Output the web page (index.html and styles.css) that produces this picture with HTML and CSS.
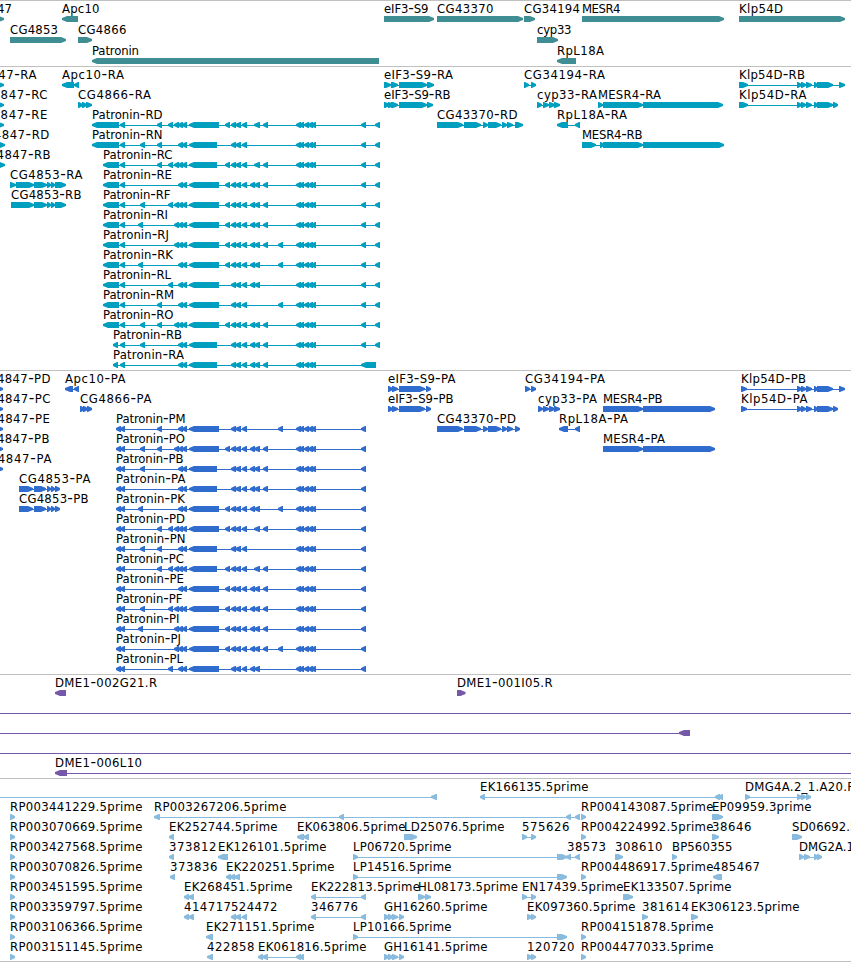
FILE: index.html
```html
<!DOCTYPE html>
<html lang="en">
<head>
    <meta charset="UTF-8">
    <meta name="viewport" content="width=device-width, initial-scale=1.0">
    <title>Genome Browser</title>
    <link rel="stylesheet" href="styles.css">
</head>
<body>
    <div class="browser">
        <svg class="track genes" id="genes"></svg>
        <svg class="track transcripts" id="transcripts"></svg>
        <svg class="track proteins" id="proteins"></svg>
        <svg class="track clones" id="clones"></svg>
        <svg class="track ests" id="ests"></svg>
    </div>
    <script src="tracks.js"></script>
</body>
</html>
```

FILE: styles.css
```css
body {
    margin: 0;
    background-color: #fff;
    overflow: hidden;
}
.browser {
    display: flex;
    flex-direction: column;
    width: 851px;
    height: 961px;
    border-bottom: 1px solid #c0c0c0;
}
.track {
    display: block;
    flex: none;
    box-sizing: border-box;
    width: 851px;
    border-top: 1px solid #c0c0c0;
    overflow: hidden;
}
.track text {
    font-family: "DejaVu Sans", sans-serif;
    font-size: 11.7px;
    fill: #000;
}
.track .dash {
    font-size: 15.5px;
}
.genes {
    height: 66px;
    fill: #3f8e94;
}
.transcripts {
    height: 304px;
    fill: #009ebf;
}
.proteins {
    height: 304px;
    fill: #306ccd;
}
.clones {
    height: 104px;
    fill: #7558a8;
}
.ests {
    height: 183px;
    fill: #88bbdd;
}
```

FILE: tracks.js
```js
const NS = 'http://www.w3.org/2000/svg';

// each feature: row | label | label start | label end | strand | exons
const genes = `
0|CG4847|-35.5|12|+|-30,4
0|Apc10|62|99.5|-|62,78
0|eIF3-S9|384|428.5|+|384,434
0|CG43370|437|493.5|+|437,523
0|CG34194|524|580|+|524,535
0|MESR4|582|620.5|+|582,724
0|Klp54D|739|783|+|739,845
1|CG4853|10|58|+|10,66
1|CG4866|78|126.5|+|78,92
1|cyp33|537|571.5|+|537,558
2|Patronin|92|139|-|92,379
2|RpL18A|557|604|-|557,576`;

const transcripts = `
0|CG4847-RA|-36|36.5|+|-10,4
1|CG4847-RC|-26|47.5|+|-10,4
2|CG4847-RE|-26|47.3|+|-10,4
3|CG4847-RD|-24.5|49.3|+|-10,5
4|CG4847-RB|-21.5|50.5|+|-10,5
5|CG4853-RA|10|82.5|+|10,16 16,34 34,47 47,51 51,55 55,66
6|CG4853-RB|11|81.5|+|11,34 34,47 47,51 51,55 55,66
0|Apc10-RA|62|124|-|62,74 74,79
1|CG4866-RA|78|151|+|78,83 82,87 86,92
0|eIF3-S9-RA|384|453|+|384,391 391,398 399,427 427,434
1|eIF3-S9-RB|384|450.5|+|384,390 388,394 391,398 399,427 427,433
2|CG43370-RD|437|517.5|+|437,463 464,481 483,488 488,501 502,507 507,513 515,523
0|CG34194-RA|524|605|+|524,529 531,536
1|cyp33-RA|537|597|+|537,542 543,549 549,555 554,560
1|MESR4-RA|598|661|+|598,603 603,643 643,723
2|RpL18A-RA|557|627|-|557,568 575,580
3|MESR4-RB|582|642.5|+|582,596 600,604 603,643 643,724
0|Klp54D-RB|739|805|+|739,748 797,802 801,806 806,812 814,818 817,833 839,845
1|Klp54D-RA|739|806.5|+|739,748 797,802 801,806 806,812 814,818 817,833 833,838`;

const proteins = `
0|CG4847-PD|-21|50.5|+|-10,3
1|CG4847-PC|-21|50.5|+|-10,3
2|CG4847-PE|-21|50|+|-10,3
3|CG4847-PB|-21|49.5|+|-10,3
4|CG4847-PA|-21|51.5|+|-10,3
5|CG4853-PA|19|90.5|+|19,33 34,46 47,51 51,55 55,60
6|CG4853-PB|19|88.5|+|19,33 34,46 47,51 51,55 55,60
0|Apc10-PA|65|125.5|-|65,73 74,79
1|CG4866-PA|80|151.5|+|80,85 83,88 87,92
0|eIF3-S9-PA|388|455.5|+|388,393 392,398 399,425 426,431
1|eIF3-S9-PB|388|453.5|+|388,393 392,398 399,425 426,431
2|CG43370-PD|437|516|+|437,463 464,481 483,488 488,501 502,507 507,513 515,520
0|CG34194-PA|525|605|+|525,530 531,536
1|cyp33-PA|538|597|+|538,543 543,549 549,555 554,560
2|RpL18A-PA|559|628|-|559,568 575,580
1|MESR4-PB|603|662.5|+|603,643 643,715
3|MESR4-PA|603|665|+|603,643 643,715
0|Klp54D-PB|741|806|+|741,747 797,802 801,806 806,812 814,818 817,833 839,845
1|Klp54D-PA|741|807.5|+|741,747 797,802 801,806 806,812 814,818 817,833 833,838`;

const clones = `
0|DME1-002G21.R|55|157|-|55,66
0|DME1-001I05.R|457|552.5|+|457,465.5
1||0|0|+|-20,-10 870,880
2||0|0|-|-20,-10 679,690
3||0|0|+|-20,-10 870,880
4|DME1-006L10|55|142|-|55,67 870,880`;

const ests = `
0||0|0|-|-20,-10 431,437
0|EK166135.5prime|480|588.5|-|480,485 715,720 718,723
0|DMG4A.2_1.A20.F|745|854|+|745,750 797,802 801,806 806,811
1|RP003441229.5prime|10|142.5|+|10,15
1|RP003267206.5prime|154|286.5|-|154,160 339,344 566,571 575,580
1|RP004143087.5prime|581|713.5|+|581,586
1|EP09959.3prime|712|811.5|+|712,723
2|RP003070669.5prime|10|142.5|+|10,15
2|EK252744.5prime|169|277.5|-|169,174
2|EK063806.5prime|297|405.5|-|297,304 303,309
2|LD25076.5prime|404|504.5|+|404,417
2|575626|522|569.5|+|522,527 531,536
2|RP004224992.5prime|581|713.5|+|581,586
2|38646|712|751.5|+|712,719
2|SD06692.5prime|792|892|+|792,802
3|RP003427568.5prime|10|142.5|+|10,15
3|373812|169|216.5|-|169,174
3|EK126101.5prime|218|326.5|-|218,228
3|LP06720.5prime|353|451.5|+|353,358 557,567
3|38573|567|606|-|566,571 575,580
3|308610|615|662.5|+|615,623
3|BP560355|672|732.5|+|672,677
3|DMG2A.1|799|854|+|799,804 804,810 814,819 817,822
4|RP003070826.5prime|10|142.5|+|10,15
4|373836|170|217.5|-|170,175
4|EK220251.5prime|226|334.5|-|226,231 230,235 234,240
4|LP14516.5prime|353|451.5|+|353,358 557,567
4|RP004486917.5prime|581|713.5|+|581,586
4|485467|713|760|-|713,722
5|RP003451595.5prime|10|142.5|+|10,15
5|EK268451.5prime|184|292.5|-|184,189 188,194
5|EK222813.5prime|311|420|-|311,316 361,366
5|HL08173.5prime|418|518|+|418,425 425,431
5|EN17439.5prime|522|623.5|+|522,527 531,536
5|EK133507.5prime|623|731.5|+|623,633
6|RP003359797.5prime|10|142.5|+|10,15
6|414717|184|231|-|184,189 188,194
6|524472|231|277.5|-|231,236 235,241 242,247
6|346776|311|358|-|311,316 361,366
6|GH16260.5prime|384|487.5|+|384,389 388,393 392,398 399,404
6|EK097360.5prime|527|635.5|+|527,532 531,536
6|381614|642|689|+|642,648
6|EK306123.5prime|691|799.5|+|691,698
7|RP003106366.5prime|10|142.5|+|10,15
7|EK271151.5prime|206|314.5|-|206,213
7|LP10166.5prime|353|451.5|+|353,358 557,567
7|RP004151878.5prime|581|713.5|+|581,586
8|RP003151145.5prime|10|142.5|+|10,15
8|422858|207|254.5|-|207,213
8|EK061816.5prime|258|366.5|-|258,263 262,268 296,301 299,304
8|GH16141.5prime|384|487.5|+|384,389 388,393 392,398 399,404
8|120720|527|574.5|+|527,532 531,536
8|RP004477033.5prime|581|713.5|+|581,586`;

// Patronin isoforms share most exons, so they are spelled with letters
const exons = {
    A: '92,119', B: '103,119', C: '113,118', D: '116,121', b: '120,125',
    c: '138,143', d: '140,145', e: '157,162', f: '168,173', g: '174,179',
    h: '178,183 182,187', H: '189,219', G: '189,217', i: '225,230',
    j: '231,236 235,241', k: '242,247', l: '250,255', m: '254,260',
    n: '263,268', o: '278,283',
    p: '296,301 299,304 304,309 308,313 311,316',
    q: '361,366', r: '375,380', s: '361,376'
};

// row, isoform, label end, exon letters
const patroninR = [
    [2, 'RD', 162.5, 'AbefghHijkmnpqr'],
    [3, 'RN', 162.5, 'AbdehGjkpqr'],
    [4, 'RC', 172.5, 'BbefghGijkmnpqr'],
    [5, 'RE', 172, 'BbhHijklmnpqr'],
    [6, 'RF', 170.5, 'BbdfghHijklmnpqr'],
    [7, 'RI', 168, 'BbcghHijklmnpqr'],
    [8, 'RJ', 169, 'BbghHijklmnopqr'],
    [9, 'RK', 173, 'BbchHijklmopqr'],
    [10, 'RL', 171, 'BbfhHjklmpqr'],
    [11, 'RM', 174, 'BbehHjkopqr'],
    [12, 'RO', 173.5, 'BbdeghHijklmnpqr'],
    [13, 'RB', 182, 'CbdhGjklmnpqr'],
    [14, 'RA', 184, 'CbhGjklmnps']
];
const patroninP = [
    [2, 'PM', 185.5, 'DbehHjkopq'],
    [3, 'PO', 185, 'DbdeghHijklmnpq'],
    [4, 'PB', 183.5, 'DbdhGjklmnpq'],
    [5, 'PA', 185.5, 'DbhGjklmnpq'],
    [6, 'PK', 185, 'DbchHijklmopq'],
    [7, 'PD', 185, 'DbefghHijkmnpq'],
    [8, 'PN', 185.5, 'DbdehGjkpq'],
    [9, 'PC', 184, 'DbefghGijkmnpq'],
    [10, 'PE', 184, 'DbhHijklmnpq'],
    [11, 'PF', 182.5, 'DbdfghHijklmnpq'],
    [12, 'PI', 179.5, 'DbcghHijklmnpq'],
    [13, 'PJ', 181, 'DbghHijklmnopq'],
    [14, 'PL', 183, 'DbfhHjklmpq']
];

function patronin(list) {
    return list.map(([row, name, end, code]) => {
        const spans = [...code].map(c => exons[c]).join(' ');
        return `\n${row}|Patronin-${name}|${spans.split(',')[0]}|${end}|-|${spans}`;
    }).join('');
}

function add(parent, tag, attrs) {
    const el = document.createElementNS(NS, tag);
    for (const key in attrs) {
        el.setAttribute(key, attrs[key]);
    }
    parent.appendChild(el);
    return el;
}

function drawLabel(svg, label, x, y, width) {
    const text = add(svg, 'text', { x: x, y: y, textLength: width });
    label.split(/(-)/).forEach(part => {
        const attrs = part === '-' ? { class: 'dash' } : {};
        add(text, 'tspan', attrs).textContent = part;
    });
}

function drawTrack(id, data, pitch) {
    const svg = document.getElementById(id);
    data.trim().split('\n').forEach(line => {
        const [row, label, start, end, strand, spanText] = line.split('|');
        const spans = spanText.split(' ').map(s => s.split(',').map(Number));
        const y = 15 + row * pitch;
        const x1 = spans[0][0];
        const x2 = spans[spans.length - 1][1];

        // intron line
        if (spans.length > 1) {
            add(svg, 'rect', { x: x1 + 2, y: y + 3, width: x2 - x1 - 4, height: 1 });
        }
        spans.forEach(([a, b]) => {
            const tip = Math.min(5, b - a - 1);
            const points = strand === '+'
                ? [a, y, b - tip, y, b, y + 2, b, y + 4, b - tip, y + 6, a, y + 6]
                : [b, y, a + tip, y, a, y + 2, a, y + 4, a + tip, y + 6, b, y + 6];
            add(svg, 'polygon', { points: points.join(' ') });
        });
        if (label) {
            drawLabel(svg, label, start, y - 3, end - start);
        }
    });
}

drawTrack('genes', genes, 21);
drawTrack('transcripts', transcripts + patronin(patroninR), 20);
drawTrack('proteins', proteins + patronin(patroninP), 20);
drawTrack('clones', clones, 20);
drawTrack('ests', ests, 20);
```
